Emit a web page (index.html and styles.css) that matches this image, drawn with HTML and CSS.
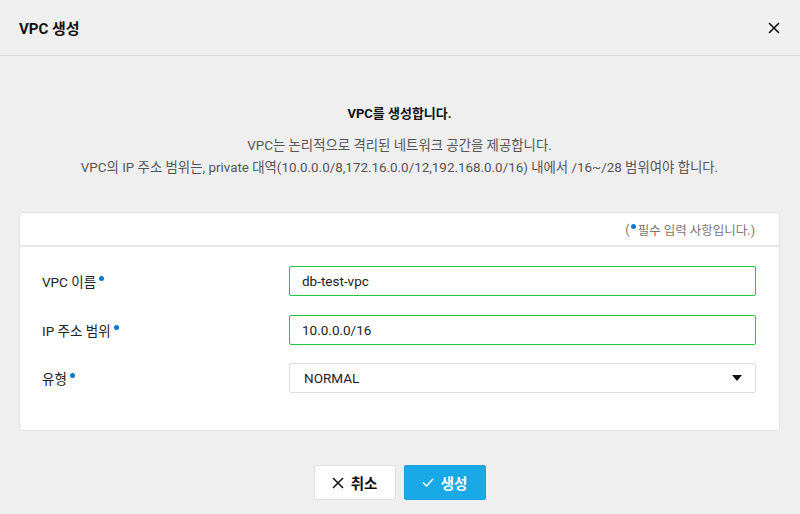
FILE: index.html
```html
<!DOCTYPE html>
<html lang="ko">
<head>
    <meta charset="UTF-8">
    <meta name="viewport" content="width=device-width, initial-scale=1.0">
    <title>VPC 생성</title>
    <link rel="stylesheet" href="styles.css">
</head>
<body>

<div class="modal">
    <div class="modal-header">
        <h1 class="modal-title">VPC 생성</h1>
        <button type="button" class="btn-close" aria-label="닫기">
            <svg width="12" height="12" viewBox="0 0 12 12">
                <path d="M1 1L11 11M11 1L1 11" stroke="#111" stroke-width="1.6" fill="none"/>
            </svg>
        </button>
    </div>

    <div class="modal-body">
        <div class="intro">
            <p class="intro-title">VPC를 생성합니다.</p>
            <p class="intro-desc">VPC는 논리적으로 격리된 네트워크 공간을 제공합니다.</p>
            <p class="intro-desc">VPC의 IP 주소 범위는, private 대역(10.0.0.0/8,172.16.0.0/12,192.168.0.0/16) 내에서 /16~/28 범위여야 합니다.</p>
        </div>

        <form class="card" id="vpcForm">
            <div class="card-head">
                (<span class="dot"></span>필수 입력 사항입니다.)
            </div>
            <div class="card-rows">
                <div class="row">
                    <label for="vpcName">VPC 이름<span class="dot"></span></label>
                    <input type="text" id="vpcName" class="field valid" value="db-test-vpc">
                </div>
                <div class="row">
                    <label for="ipRange">IP 주소 범위<span class="dot"></span></label>
                    <input type="text" id="ipRange" class="field valid" value="10.0.0.0/16">
                </div>
                <div class="row">
                    <label for="vpcType">유형<span class="dot"></span></label>
                    <div class="select">
                        <span>NORMAL</span>
                        <svg width="10" height="6" viewBox="0 0 10 6"><path d="M0 0H10L5 6Z" fill="#111"/></svg>
                    </div>
                </div>
            </div>
        </form>

        <div class="actions">
            <button type="button" class="btn btn-cancel">
                <svg width="12" height="12" viewBox="0 0 12 12">
                    <path d="M1 1L11 11M11 1L1 11" stroke="#111" stroke-width="1.5" fill="none"/>
                </svg>
                취소
            </button>
            <button type="button" class="btn btn-primary">
                <svg width="12" height="9" viewBox="0 0 12 9">
                    <path d="M1 4.5L4.5 8L11 1" stroke="#fff" stroke-width="1.5" fill="none"/>
                </svg>
                생성
            </button>
        </div>
    </div>
</div>

</body>
</html>
```

FILE: styles.css
```css
body {
    margin: 0;
    font-family: Roboto, "Noto Sans CJK KR", sans-serif;
    background-color: #efefef;
    color: #222;
}

.modal {
    width: 800px;
    height: 514px;
    background-color: #efefef;
}

.modal-header {
    display: flex;
    align-items: center;
    justify-content: space-between;
    height: 55px;
    padding: 0 16px 0 19px;
    border-bottom: 1px solid #dcdcdc;
}

.modal-title {
    margin: 0;
    font-size: 15px;
    font-weight: bold;
    color: #111;
}

.btn-close {
    display: flex;
    padding: 4px;
    border: none;
    background: none;
    cursor: pointer;
}

.modal-body {
    padding: 0 20px 0 19px;
}

.intro {
    text-align: center;
    padding-top: 48px;
}

.intro p {
    margin: 0;
}

.intro-title {
    font-size: 13px;
    font-weight: bold;
    color: #111;
    line-height: 20px;
    margin-bottom: 11px !important;
}

.intro-desc {
    font-size: 13.4px;
    color: #555;
    line-height: 22px;
}

.card {
    margin-top: 33px;
    background-color: #fff;
    border: 1px solid #e2e2e2;
    border-radius: 3px;
}

.card-head {
    height: 32px;
    display: flex;
    align-items: center;
    justify-content: flex-end;
    padding-right: 24px;
    font-size: 12.5px;
    color: #777;
    border-bottom: 2px solid #e6e6e6;
}

.card-head .dot {
    margin: 0 2px 6px 1px;
}

.dot {
    display: inline-block;
    width: 5px;
    height: 5px;
    border-radius: 50%;
    background-color: #0a78d8;
    vertical-align: middle;
}

.card-rows {
    display: flex;
    flex-direction: column;
    gap: 18.5px;
    padding: 19px 23px 37px 22px;
}

.row {
    display: grid;
    grid-template-columns: 247px 1fr;
    align-items: center;
}

.row label {
    font-size: 13.5px;
    color: #222;
}

.row label .dot {
    margin: 0 0 9px 3px;
}

.field {
    box-sizing: border-box;
    height: 30px;
    padding: 0 12px;
    font-family: inherit;
    font-size: 13.5px;
    color: #222;
    border: 1px solid #ddd;
    border-radius: 2px;
    outline: none;
}

.field.valid {
    border-color: #1ec73c;
}

.select {
    box-sizing: border-box;
    height: 30px;
    display: flex;
    align-items: center;
    justify-content: space-between;
    padding: 0 13px 0 14px;
    font-size: 13.5px;
    color: #222;
    border: 1px solid #ddd;
    border-radius: 2px;
}

.actions {
    display: flex;
    justify-content: center;
    gap: 8px;
    margin-top: 34px;
}

.btn {
    box-sizing: border-box;
    display: flex;
    align-items: center;
    justify-content: center;
    gap: 7px;
    width: 82px;
    height: 35px;
    font-family: inherit;
    font-size: 14.5px;
    font-weight: bold;
    border-radius: 2px;
    cursor: pointer;
}

.btn-cancel {
    background-color: #fff;
    color: #111;
    border: 1px solid #e0e0e0;
}

.btn-primary {
    background-color: #18a9e6;
    color: #fff;
    border: 1px solid #1aa0dc;
}

.btn-primary:hover {
    background-color: #1599d1;
}
```
